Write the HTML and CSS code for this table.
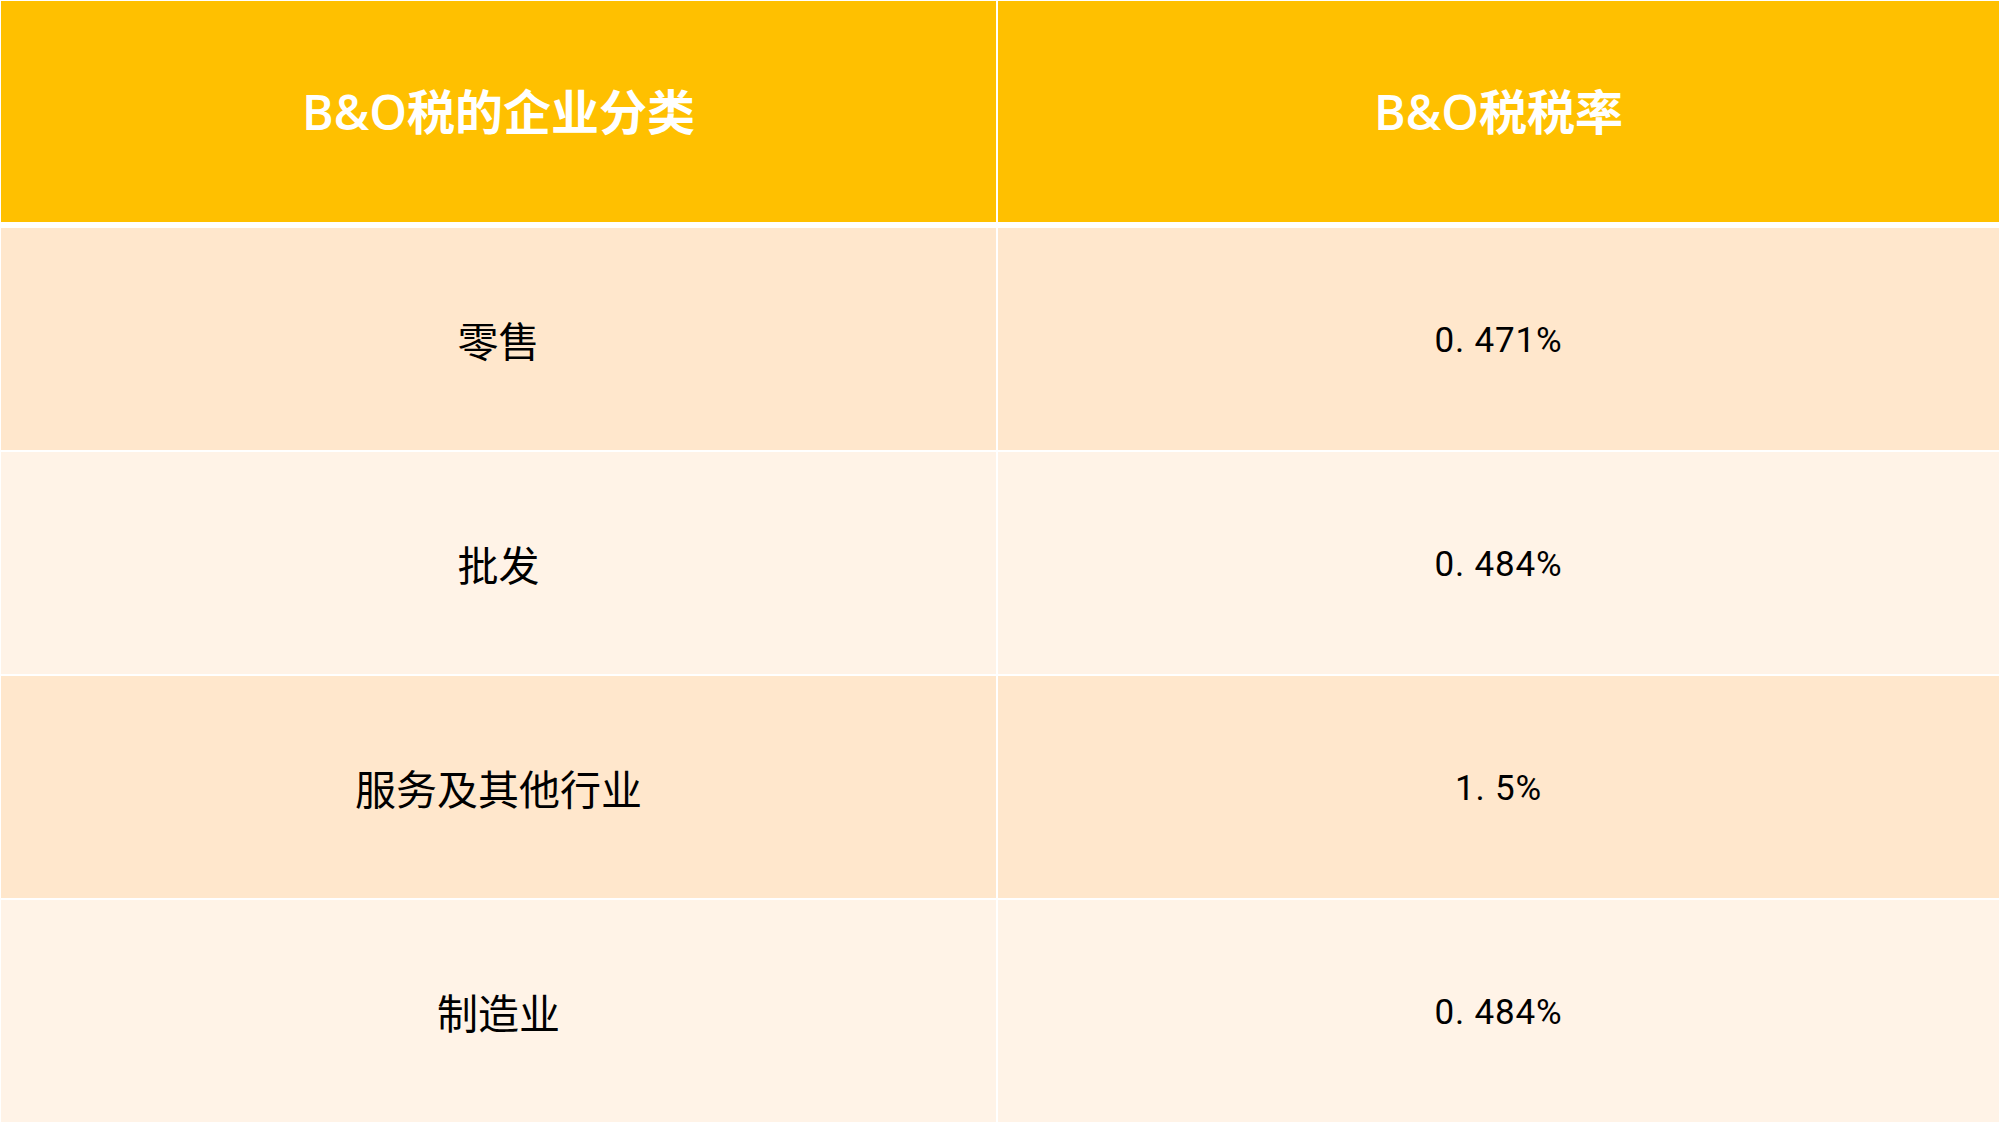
FILE: index.html
```html
<!DOCTYPE html>
<html lang="zh-CN">

<head>
  <meta charset="UTF-8">
  <meta name="viewport" content="width=device-width, initial-scale=1.0">
  <title>B&amp;O税税率</title>
  <link rel="stylesheet" href="styles.css">
</head>

<body>
  <!-- 税率表 -->
  <div class="rate-table">
    <!-- 表头 -->
    <div class="head-cell">B&amp;O税的企业分类</div>
    <div class="head-cell">B&amp;O税税率</div>

    <!-- 零售 -->
    <div class="cell row-dark">零售</div>
    <div class="cell cell-num row-dark">0. 471%</div>

    <!-- 批发 -->
    <div class="cell row-light">批发</div>
    <div class="cell cell-num row-light">0. 484%</div>

    <!-- 服务及其他行业 -->
    <div class="cell row-dark">服务及其他行业</div>
    <div class="cell cell-num row-dark">1. 5%</div>

    <!-- 制造业 -->
    <div class="cell row-light">制造业</div>
    <div class="cell cell-num row-light">0. 484%</div>
  </div>
</body>

</html>
```

FILE: styles.css
```css
/* 全局重置 */
* {
  margin: 0;
  padding: 0;
  box-sizing: border-box;
}

body {
  background: #FFFFFF;
  width: 2000px;
  height: 1125px;
  padding: 1px 1px 2px 1px;
  font-family: "Noto Sans CJK SC", sans-serif;
}

/* 表格：两列，白色细缝分隔 */
.rate-table {
  display: grid;
  grid-template-columns: 995px 1fr;
  grid-template-rows: 225px repeat(4, 222px);
  column-gap: 2px;
  row-gap: 2px;
}

/* 表头单元格 */
.head-cell {
  background: #FFC000;
  color: #FFFFFF;
  font-family: "Open Sans", "Noto Sans CJK SC", sans-serif;
  font-size: 48px;
  font-weight: 600;
  display: flex;
  align-items: center;
  justify-content: center;
  padding-bottom: 5px;
  margin-bottom: 4px; /* 表头下方较宽的白缝 */
}

/* 内容单元格 */
.cell {
  display: flex;
  align-items: center;
  justify-content: center;
  font-size: 41px;
  color: #000000;
}

/* 数字 */
.cell-num {
  font-family: Roboto, sans-serif;
  font-size: 35px;
  letter-spacing: 0.8px;
  padding-top: 2px;
}

.row-dark {
  background: #FFE7CC;
}

.row-light {
  background: #FFF3E7;
}
```
